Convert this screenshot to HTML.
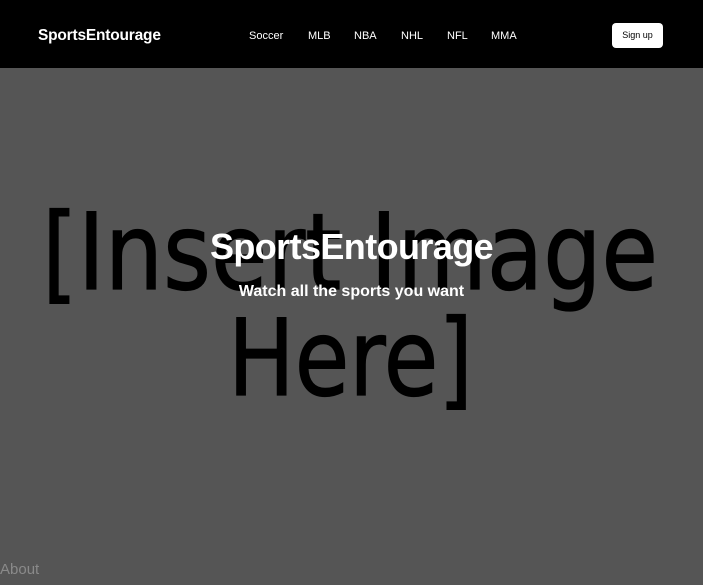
<!DOCTYPE html>
<html><head><meta charset="utf-8"><style>
*{margin:0;padding:0;box-sizing:border-box}
body{width:703px;height:585px;overflow:hidden;background:#555;font-family:"Liberation Sans",sans-serif;position:relative}
nav{position:absolute;left:0;top:0;width:703px;height:68px;background:#000;color:#fff}
.logo{position:absolute;left:38px;top:27px;font-weight:bold;font-size:15.5px;letter-spacing:-0.2px}
.lk{position:absolute;top:30px;font-size:11px}
.btn{position:absolute;left:612px;top:23px;width:51px;height:25px;background:#fff;border-radius:4px;color:#000;font-size:9px;text-align:center;line-height:25px}
svg{position:absolute;left:0;top:0}
.h1{position:absolute;left:0;width:703px;text-align:center;color:#fff;font-weight:bold}
.about{position:absolute;left:0;top:561px;font-size:15px;color:#8a8a8a}
</style></head><body>
<nav>
<div class="logo">SportsEntourage</div>
<div class="lk" style="left:249px">Soccer</div>
<div class="lk" style="left:308px">MLB</div>
<div class="lk" style="left:354px">NBA</div>
<div class="lk" style="left:401px">NHL</div>
<div class="lk" style="left:447px">NFL</div>
<div class="lk" style="left:491px">MMA</div>
<div class="btn">Sign up</div>
</nav>
<svg width="703" height="585"><g font-family="DejaVu Sans, sans-serif" font-size="106" fill="#000" stroke="#000" stroke-width="1.2">
<text x="42" y="289" textLength="616" lengthAdjust="spacingAndGlyphs">[Insert Image</text>
<text x="228" y="395" textLength="245" lengthAdjust="spacingAndGlyphs">Here]</text></g></svg>
<div class="h1" style="top:226px;font-size:36px;letter-spacing:-0.6px">SportsEntourage</div>
<div class="h1" style="top:283px;font-size:16px">Watch all the sports you want</div>
<div class="about">About</div>
</body></html>
